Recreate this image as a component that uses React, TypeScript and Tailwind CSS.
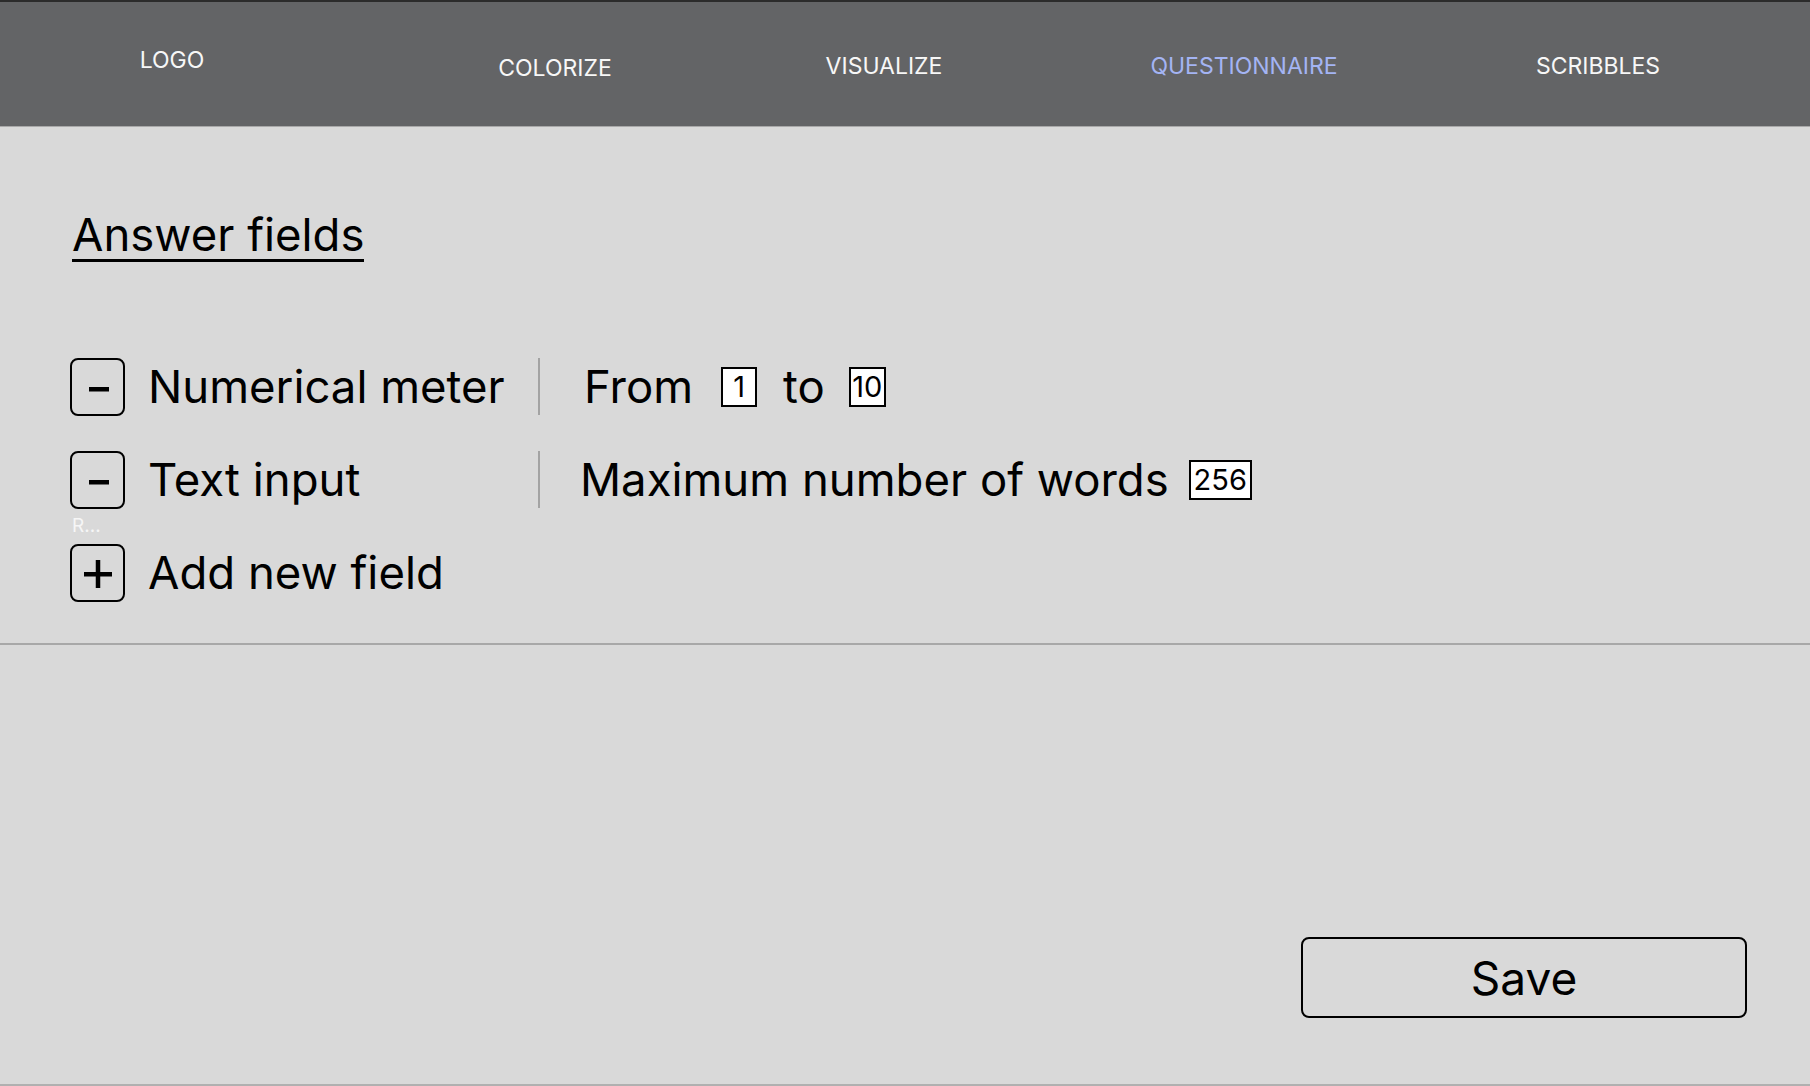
import React from "react";

const navItems = [
  { label: "COLORIZE", width: "w-[422px]", pt: "pt-[52px]", active: false },
  { label: "VISUALIZE", width: "w-[236px]", pt: "pt-[50px]", active: false },
  { label: "QUESTIONNAIRE", width: "w-[484px]", pt: "pt-[50px]", active: true },
  { label: "SCRIBBLES", width: "w-[224px]", pt: "pt-[50px]", active: false },
];

function IconBox({ kind }: { kind: "minus" | "plus" }) {
  return (
    <div className="w-[55px] h-[58px] shrink-0 rounded-lg border-2 border-black flex items-center justify-center">
      {kind === "minus" ? (
        <svg width="22" height="22" viewBox="0 0 22 22" className="mt-[4px] ml-[2px]">
          <rect x="1" y="9" width="20" height="4.5" fill="#000" />
        </svg>
      ) : (
        <svg width="30" height="30" viewBox="0 0 30 30" className="mt-[2px]">
          <rect x="1" y="13" width="28" height="4.5" fill="#000" />
          <rect x="12.75" y="1" width="4.5" height="28" fill="#000" />
        </svg>
      )}
    </div>
  );
}

function ValueBox({ value, width }: { value: string; width: string }) {
  return (
    <span
      className={`${width} h-[40px] bg-white border-2 border-black inline-flex items-center justify-center text-[29px] leading-none`}
    >
      {value}
    </span>
  );
}

function Divider() {
  return <div className="w-[2px] h-[57px] bg-[#a3a3a3] shrink-0" />;
}

export default function App() {
  return (
    <div
      className="w-[1810px] h-[1086px] flex flex-col bg-[#d9d9d9] text-black overflow-hidden"
      style={{ fontFamily: "Inter, 'Noto Sans', sans-serif" }}
    >
      {/* top bar */}
      <header className="h-[127px] shrink-0 bg-[#636466] border-t-2 border-[#2b2b2b] border-b border-b-[#a9a9a9] flex items-start text-[23px] leading-[28px] text-[#f7f7f7]">
        <div className="w-[344px] pt-[44px] text-center">LOGO</div>
        {navItems.map((item) => (
          <div
            key={item.label}
            className={`${item.width} ${item.pt} text-center ${item.active ? "text-[#a4b4f4]" : ""}`}
          >
            {item.label}
          </div>
        ))}
      </header>

      {/* answer fields */}
      <section className="shrink-0 pl-[70px] pt-[85px] pb-[41px] border-b-2 border-[#a8a8a8] text-[45.5px] leading-none">
        <h1 className="w-fit ml-[2px] pb-[1px] border-b-[3px] border-black">Answer fields</h1>

        <div className="mt-[96px] flex flex-col">
          <div className="flex items-center h-[58px]">
            <IconBox kind="minus" />
            <div className="w-[413px] pl-[23px]">Numerical meter</div>
            <Divider />
            <div className="pl-[44px] flex items-center">
              <span>From</span>
              <span className="ml-[28px] inline-flex">
                <ValueBox value="1" width="w-[36px]" />
              </span>
              <span className="ml-[26px]">to</span>
              <span className="ml-[24px] inline-flex">
                <ValueBox value="10" width="w-[37px]" />
              </span>
            </div>
          </div>

          <div className="flex items-center h-[58px] mt-[35px]">
            <IconBox kind="minus" />
            <div className="w-[413px] pl-[23px]">Text input</div>
            <Divider />
            <div className="pl-[40px] flex items-center">
              <span>Maximum number of words</span>
              <span className="ml-[20px] inline-flex">
                <ValueBox value="256" width="w-[63px]" />
              </span>
            </div>
          </div>

          <div className="h-[35px] pt-[7px] pl-[2px] text-[19px] text-[#f6f6f6]">R...</div>

          <div className="flex items-center h-[58px]">
            <IconBox kind="plus" />
            <div className="pl-[23px]">Add new field</div>
          </div>
        </div>
      </section>

      {/* footer actions */}
      <section className="flex-1 flex items-end justify-end pr-[63px] pb-[66px] border-b-2 border-[#b0b0b0]">
        <button className="w-[446px] h-[81px] rounded-lg border-2 border-black text-[46px] leading-none flex items-center justify-center">
          Save
        </button>
      </section>
    </div>
  );
}
